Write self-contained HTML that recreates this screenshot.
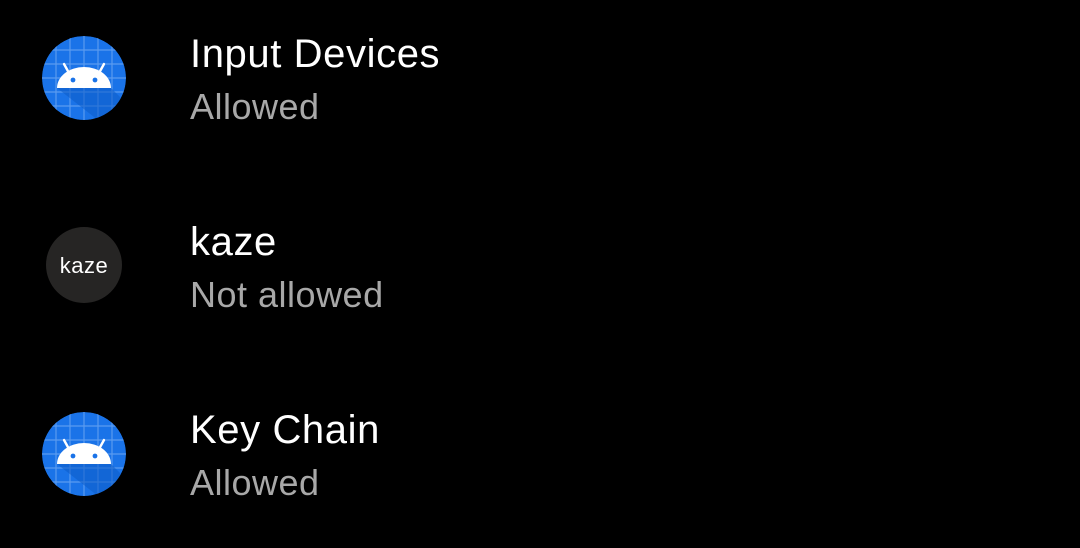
<!DOCTYPE html>
<html><head><style>
body{margin:0;width:1080px;height:548px;background:#000;overflow:hidden;font-family:"Liberation Sans",Roboto,sans-serif;position:relative}
.t{position:absolute;left:190px;color:#fff;font-size:40px;letter-spacing:0.6px;white-space:nowrap}
.s{position:absolute;left:190px;color:#a8a8a8;font-size:36px;letter-spacing:0.5px;white-space:nowrap}
svg{position:absolute}
</style></head><body>
<svg width="0" height="0"><defs>
<g id="and">
<circle cx="42" cy="42" r="42" fill="#1a73e8"/>
<g stroke="#5a9bf0" stroke-width="1.2">
<path d="M0 14H84M0 28H84M0 42H84M0 56H84M0 70H84M14 0V84M28 0V84M42 0V84M56 0V84M70 0V84"/>
</g>
<path d="M15 52 L69 52 L95 78 L70 95 Z" fill="#0d5bc6" opacity=".55"/>
<path d="M15 52a27 21 0 0 1 54 0z" fill="#fff"/>
<path d="M27 37l-5-9M57 37l5-9" stroke="#fff" stroke-width="2.4" stroke-linecap="round"/>
<circle cx="31" cy="44" r="2.4" fill="#1a73e8"/><circle cx="53" cy="44" r="2.4" fill="#1a73e8"/>
</g></defs></svg>
<svg style="left:42px;top:36px" width="84" height="84" viewBox="0 0 84 84"><clipPath id="c1"><circle cx="42" cy="42" r="42"/></clipPath><g clip-path="url(#c1)"><use href="#and"/></g></svg>
<svg style="left:46px;top:227px" width="76" height="76"><circle cx="38" cy="38" r="38" fill="#262524"/><text x="38" y="46" text-anchor="middle" fill="#fff" font-size="22" font-family="Liberation Sans,sans-serif" letter-spacing="0.5">kaze</text></svg>
<svg style="left:42px;top:412px" width="84" height="84" viewBox="0 0 84 84"><clipPath id="c2"><circle cx="42" cy="42" r="42"/></clipPath><g clip-path="url(#c2)"><use href="#and"/></g></svg>
<div class="t" style="top:32px">Input Devices</div>
<div class="s" style="top:86px">Allowed</div>
<div class="t" style="top:220px">kaze</div>
<div class="s" style="top:274px">Not allowed</div>
<div class="t" style="top:408px">Key Chain</div>
<div class="s" style="top:462px">Allowed</div>
</body></html>
